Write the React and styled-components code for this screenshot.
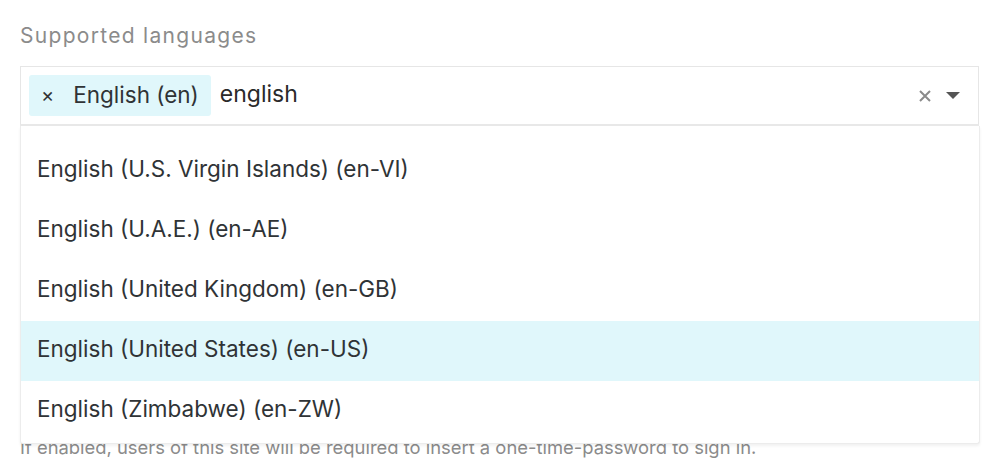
import React from "react";
import styled, { createGlobalStyle } from "styled-components";

const Global = createGlobalStyle`
  html, body { margin: 0; padding: 0; background: #fff; }
  body { font-family: Inter, "Noto Sans", sans-serif; -webkit-font-smoothing: antialiased; }
`;

const Page = styled.div`
  padding: 22px 21px 0 20px;
  width: 959px;
`;

const Label = styled.div`
  font-size: 21px;
  letter-spacing: 1.3px;
  color: #8b8b8b;
  line-height: 28px;
  margin-bottom: 16px;
`;

const Field = styled.div`
  position: relative;
`;

const Control = styled.div`
  height: 60px;
  box-sizing: border-box;
  border: 1px solid #e6e6e6;
  border-bottom: 2px solid #e8e8e8;
  display: flex;
  align-items: center;
  padding: 0 8px;
  gap: 9px;
  background: #fff;
`;

const Chip = styled.div`
  display: flex;
  align-items: center;
  height: 41px;
  padding: 0 12px 2px 12px;
  box-sizing: border-box;
  background: #e0f7fb;
  border-radius: 3px;
  font-size: 22.5px;
  color: #2f3336;
  gap: 19px;
`;

const ChipX = styled.span`
  font-size: 20px;
  color: #333;
`;

const Input = styled.div`
  flex: 1;
  font-size: 23px;
  color: #2a2a2a;
  margin-top: -4px;
`;

const Indicators = styled.div`
  display: flex;
  align-items: center;
  gap: 14px;
  padding-right: 10px;
`;

const Menu = styled.div`
  position: absolute;
  top: 100%;
  left: 0;
  right: -1px;
  background: #fff;
  border: 1px solid #ececec;
  border-top: none;
  border-radius: 0 0 3px 3px;
  box-shadow: 0 2px 3px rgba(0, 0, 0, 0.06);
  padding: 15px 0 2px;
  z-index: 2;
`;

const Option = styled.div`
  height: 60px;
  box-sizing: border-box;
  display: flex;
  align-items: center;
  padding: 0 16px 5px;
  font-size: 22.5px;
  color: #2f3336;
  background: ${(p) => (p.$active ? "#e0f7fb" : "transparent")};
`;

const Help = styled.p`
  margin: 310px 0 0;
  font-size: 18.4px;
  color: #8b8b8b;
`;

const options = [
  "English (U.S. Virgin Islands) (en-VI)",
  "English (U.A.E.) (en-AE)",
  "English (United Kingdom) (en-GB)",
  "English (United States) (en-US)",
  "English (Zimbabwe) (en-ZW)",
];

export default function App() {
  return (
    <Page>
      <Global />
      <Label>Supported languages</Label>
      <Field>
        <Control>
          <Chip>
            <ChipX>×</ChipX>
            <span>English (en)</span>
          </Chip>
          <Input>english</Input>
          <Indicators>
            <svg width="14" height="14" viewBox="0 0 14 14">
              <path d="M2 2 L12 12 M12 2 L2 12" stroke="#8a8a8a" strokeWidth="2" />
            </svg>
            <svg width="14" height="8" viewBox="0 0 14 8">
              <path d="M0 0 H14 L7 7 Z" fill="#555" />
            </svg>
          </Indicators>
        </Control>
        <Menu>
          {options.map((o, i) => (
            <Option key={o} $active={i === 3}>
              {o}
            </Option>
          ))}
        </Menu>
      </Field>
      <Help>If enabled, users of this site will be required to insert a one-time-password to sign in.</Help>
    </Page>
  );
}
